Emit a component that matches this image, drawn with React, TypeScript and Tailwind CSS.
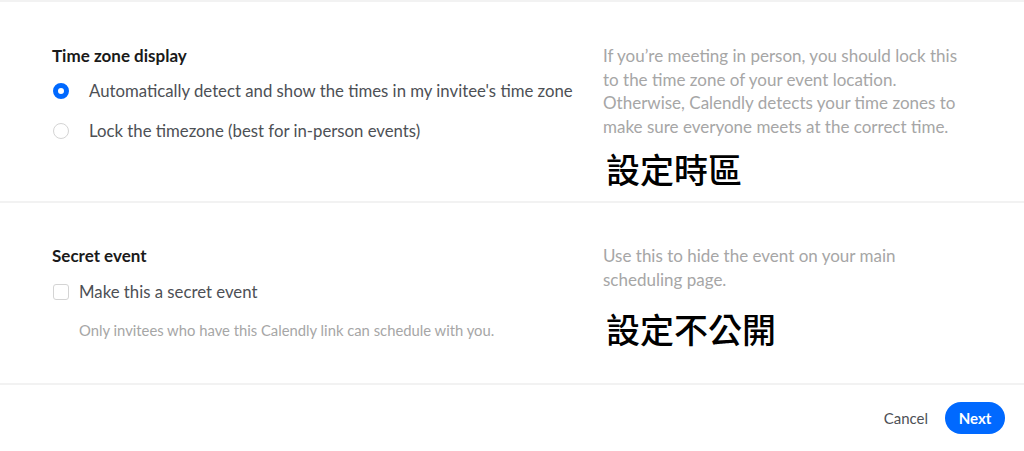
import React from "react";

const FONT = { fontFamily: "Lato, 'Noto Sans CJK TC', sans-serif" };

function Radio({ checked }: { checked?: boolean }) {
  return checked ? (
    <span className="box-border inline-block h-4 w-4 shrink-0 rounded-full border-[5px] border-[#0069ff] bg-white" />
  ) : (
    <span className="box-border inline-block h-4 w-4 shrink-0 rounded-full border border-[#d4d4d4] bg-white" />
  );
}

export default function App() {
  return (
    <div className="min-h-[451px] w-[1024px] bg-white" style={FONT}>
      <div className="h-[2px] bg-[#f2f2f2]" />

      {/* time zone */}
      <section className="grid grid-cols-[551px_1fr] pl-[52px] pt-[42px] pb-[11px]">
        <div className="flex flex-col">
          <h3 className="text-[17px] font-bold leading-6 text-[#1a1a1a]">Time zone display</h3>
          <div className="mt-[11px] flex flex-col gap-4">
            <label className="flex h-6 items-center gap-5 pl-[1px] text-[16.75px] text-[#4d5055]">
              <Radio checked />
              Automatically detect and show the times in my invitee's time zone
            </label>
            <label className="flex h-6 items-center gap-5 pl-[1px] text-[16.75px] text-[#4d5055]">
              <Radio />
              Lock the timezone (best for in-person events)
            </label>
          </div>
        </div>
        <div className="flex flex-col">
          <p className="text-[17px] leading-[23.5px] text-[#a6a6a6]">
            If you’re meeting in person, you should lock this
            <br />
            to the time zone of your event location.
            <br />
            Otherwise, Calendly detects your time zones to
            <br />
            make sure everyone meets at the correct time.
          </p>
          <p className="mt-3 pl-[3px] text-[34px] font-medium leading-10 text-black">設定時區</p>
        </div>
      </section>

      <div className="h-[2px] bg-[#f2f2f2]" />

      {/* secret event */}
      <section className="grid grid-cols-[551px_1fr] pl-[52px] pt-[41px] pb-[33px]">
        <div className="flex flex-col">
          <h3 className="text-[17px] font-bold leading-6 text-[#1a1a1a]">Secret event</h3>
          <label className="mt-3 flex h-6 items-center gap-[10px] pl-[1px] text-[16.75px] text-[#4d5055]">
            <span className="box-border inline-block h-4 w-4 shrink-0 rounded-[3px] border border-[#d4d4d4] bg-white" />
            Make this a secret event
          </label>
          <p className="mt-4 pl-[27px] text-[14.8px] leading-5 text-[#a6a6a6]">
            Only invitees who have this Calendly link can schedule with you.
          </p>
        </div>
        <div className="flex flex-col">
          <p className="text-[17px] leading-[23.5px] text-[#a6a6a6]">
            Use this to hide the event on your main
            <br />
            scheduling page.
          </p>
          <p className="mt-[19px] pl-[3px] text-[34px] font-medium leading-10 text-black">設定不公開</p>
        </div>
      </section>

      <div className="h-[2px] bg-[#f2f2f2]" />

      <footer className="flex items-center justify-end gap-[17px] pt-[17px] pr-[19px]">
        <button className="text-[15px] text-[#4d5055]">Cancel</button>
        <button className="h-8 w-[60px] rounded-full bg-[#0069ff] text-[15px] font-bold text-white">Next</button>
      </footer>
    </div>
  );
}
